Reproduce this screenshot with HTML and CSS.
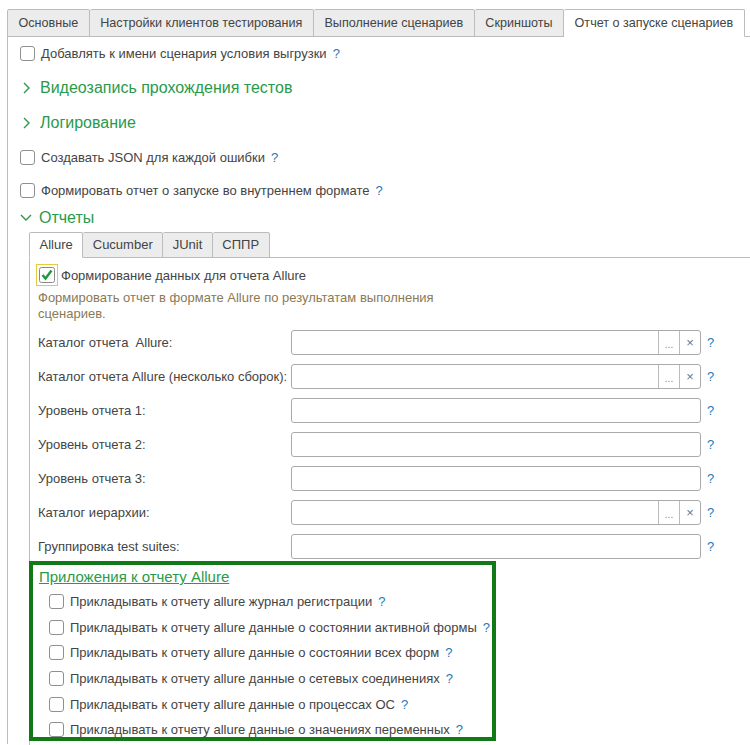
FILE: index.html
```html
<!DOCTYPE html>
<html lang="ru">
<head>
    <meta charset="UTF-8">
    <title>Отчет о запуске сценариев</title>
    <link rel="stylesheet" href="styles.css">
</head>
<body>
<div class="tabs">
    <div class="tab">Основные</div>
    <div class="tab">Настройки клиентов тестирования</div>
    <div class="tab">Выполнение сценариев</div>
    <div class="tab">Скриншоты</div>
    <div class="tab active">Отчет о запуске сценариев</div>
</div>
<div class="panel">
    <div class="row r1"><span class="box"></span>Добавлять к имени сценария условия выгрузки<span class="q">?</span></div>
    <div class="group r2">
        <svg class="chev" width="10" height="12" viewBox="0 0 10 12"><polyline points="2,1 7,6 2,11" fill="none" stroke="#2a9a4a" stroke-width="1.4"/></svg>
        Видеозапись прохождения тестов
    </div>
    <div class="group r2">
        <svg class="chev" width="10" height="12" viewBox="0 0 10 12"><polyline points="2,1 7,6 2,11" fill="none" stroke="#2a9a4a" stroke-width="1.4"/></svg>
        Логирование
    </div>
    <div class="row r3"><span class="box"></span>Создавать JSON для каждой ошибки<span class="q">?</span></div>
    <div class="row r4"><span class="box"></span>Формировать отчет о запуске во внутреннем формате<span class="q">?</span></div>
    <div class="group open">
        <svg class="chev" width="12" height="10" viewBox="0 0 12 10"><polyline points="1,2 6,7 11,2" fill="none" stroke="#2a9a4a" stroke-width="1.4"/></svg>
        Отчеты
    </div>

    <div class="inner">
        <div class="tabs small">
            <div class="tab active">Allure</div>
            <div class="tab">Cucumber</div>
            <div class="tab">JUnit</div>
            <div class="tab">СППР</div>
        </div>
        <div class="inner-panel">
            <div class="row checked-row">
                <span class="focus">
                    <svg width="16" height="16" viewBox="0 0 16 16">
                        <rect x="0.5" y="0.5" width="15" height="15" rx="2" fill="#fff" stroke="#8a8a8a"/>
                        <polyline points="3.5,8 6.5,11.5 12.5,3.5" fill="none" stroke="#1e9a3c" stroke-width="2.4"/>
                    </svg>
                </span>
                Формирование данных для отчета Allure
            </div>
            <div class="note">Формировать отчет в формате Allure по результатам выполнения сценариев.</div>

            <div class="field">
                <label>Каталог отчета&nbsp; Allure:</label>
                <div class="input"><span class="btn dots">...</span><span class="btn">×</span></div>
                <span class="q">?</span>
            </div>
            <div class="field">
                <label>Каталог отчета Allure (несколько сборок):</label>
                <div class="input"><span class="btn dots">...</span><span class="btn">×</span></div>
                <span class="q">?</span>
            </div>
            <div class="field">
                <label>Уровень отчета 1:</label>
                <div class="input"></div>
                <span class="q">?</span>
            </div>
            <div class="field">
                <label>Уровень отчета 2:</label>
                <div class="input"></div>
                <span class="q">?</span>
            </div>
            <div class="field">
                <label>Уровень отчета 3:</label>
                <div class="input"></div>
                <span class="q">?</span>
            </div>
            <div class="field">
                <label>Каталог иерархии:</label>
                <div class="input"><span class="btn dots">...</span><span class="btn">×</span></div>
                <span class="q">?</span>
            </div>
            <div class="field">
                <label>Группировка test suites:</label>
                <div class="input"></div>
                <span class="q">?</span>
            </div>

            <div class="attach">
                <div class="attach-title">Приложения к отчету Allure</div>
                <div class="row a-row"><span class="box"></span>Прикладывать к отчету allure журнал регистрации<span class="q">?</span></div>
                <div class="row a-row"><span class="box"></span>Прикладывать к отчету allure данные о состоянии активной формы<span class="q">?</span></div>
                <div class="row a-row"><span class="box"></span>Прикладывать к отчету allure данные о состоянии всех форм<span class="q">?</span></div>
                <div class="row a-row"><span class="box"></span>Прикладывать к отчету allure данные о сетевых соединениях<span class="q">?</span></div>
                <div class="row a-row"><span class="box"></span>Прикладывать к отчету allure данные о процессах ОС<span class="q">?</span></div>
                <div class="row a-row"><span class="box"></span>Прикладывать к отчету allure данные о значениях переменных<span class="q">?</span></div>
            </div>
        </div>
    </div>
</div>
</body>
</html>
```

FILE: styles.css
```css
*{
    padding: 0;
    margin: 0;
    box-sizing: border-box;
}
html,body{
    overflow: hidden;
}
body{
    font-family: "Liberation Sans", Arial, sans-serif;
    font-size: 13px;
    color: #444;
    background: #fff;
    width: 750px;
    height: 745px;
}
.tabs{
    display: flex;
    padding: 9px 0 0 7px;
    position: relative;
    z-index: 1;
    margin-bottom: -1px;
}
.tab{
    height: 28px;
    line-height: 26px;
    padding: 0 10.5px;
    font-size: 12.6px;
    background: #ececec;
    border: 1px solid #bcbcbc;
    border-left: none;
    border-radius: 2px 2px 0 0;
    white-space: nowrap;
}
.tab:first-child{
    border-left: 1px solid #bcbcbc;
}
.tab.active{
    background: #fff;
    border-bottom-color: #fff;
}
.panel{
    margin-left: 7px;
    border-left: 1px solid #bcbcbc;
    border-top: 1px solid #bcbcbc;
    height: 708px;
    padding-left: 12px;
}
.row{
    display: flex;
    align-items: center;
    white-space: nowrap;
}
.box{
    width: 15px;
    height: 15px;
    border: 1px solid #8f8f8f;
    border-radius: 3px;
    background: #fff;
    margin-right: 6px;
    flex-shrink: 0;
}
.q{
    color: #2779b5;
    margin-left: 6px;
}
.r1{
    height: 33px;
}
.r3{
    height: 34px;
}
.r4{
    height: 33px;
}
.group{
    display: flex;
    align-items: center;
    color: #2a9a4a;
    font-size: 16px;
}
.group.r2{
    height: 35px;
}
.group .chev{
    margin: 0 8px 0 2px;
}
.group.open{
    height: 22px;
}
.group.open .chev{
    margin: 0 7px 0 0;
}
.inner{
    margin: 3px 0 0 9px;
}
.tabs.small{
    padding: 0;
}
.tabs.small .tab{
    height: 26px;
    line-height: 24px;
    padding: 0 9.5px;
    font-size: 13px;
}
.inner-panel{
    border-left: 1px solid #bcbcbc;
    border-top: 1px solid #bcbcbc;
    padding-left: 6px;
    height: 488px;
}
.checked-row{
    height: 30px;
    padding-top: 4px;
}
.focus{
    display: flex;
    align-items: center;
    justify-content: center;
    width: 22px;
    height: 22px;
    border: 1px solid #e8c840;
    margin-right: 3px;
}
.note{
    color: #8a7a55;
    width: 420px;
    line-height: 16px;
    margin: 2px 0 3px 2px;
}
.field{
    display: flex;
    align-items: center;
    height: 34px;
    padding-left: 2px;
}
.field label{
    width: 253px;
    flex-shrink: 0;
    white-space: nowrap;
}
.input{
    width: 410px;
    height: 25px;
    border: 1px solid #aaa;
    border-radius: 3px;
    display: flex;
    justify-content: flex-end;
    background: #fff;
}
.btn{
    width: 21px;
    border-left: 1px solid #bcbcbc;
    display: flex;
    align-items: center;
    justify-content: center;
    color: #777;
    font-size: 13px;
}
.btn.dots{
    align-items: flex-end;
    padding-bottom: 4px;
    font-size: 10px;
    color: #888;
}
.attach{
    width: 467px;
    height: 180px;
    border: 4px solid #117a17;
    margin: -2px 0 0 -7px;
    padding: 0 0 0 6px;
    overflow: hidden;
}
.attach-title{
    color: #2a9a4a;
    font-size: 15px;
    text-decoration: underline;
    height: 24px;
    line-height: 24px;
}
.a-row{
    height: 25.6px;
    padding-left: 10px;
}
```
